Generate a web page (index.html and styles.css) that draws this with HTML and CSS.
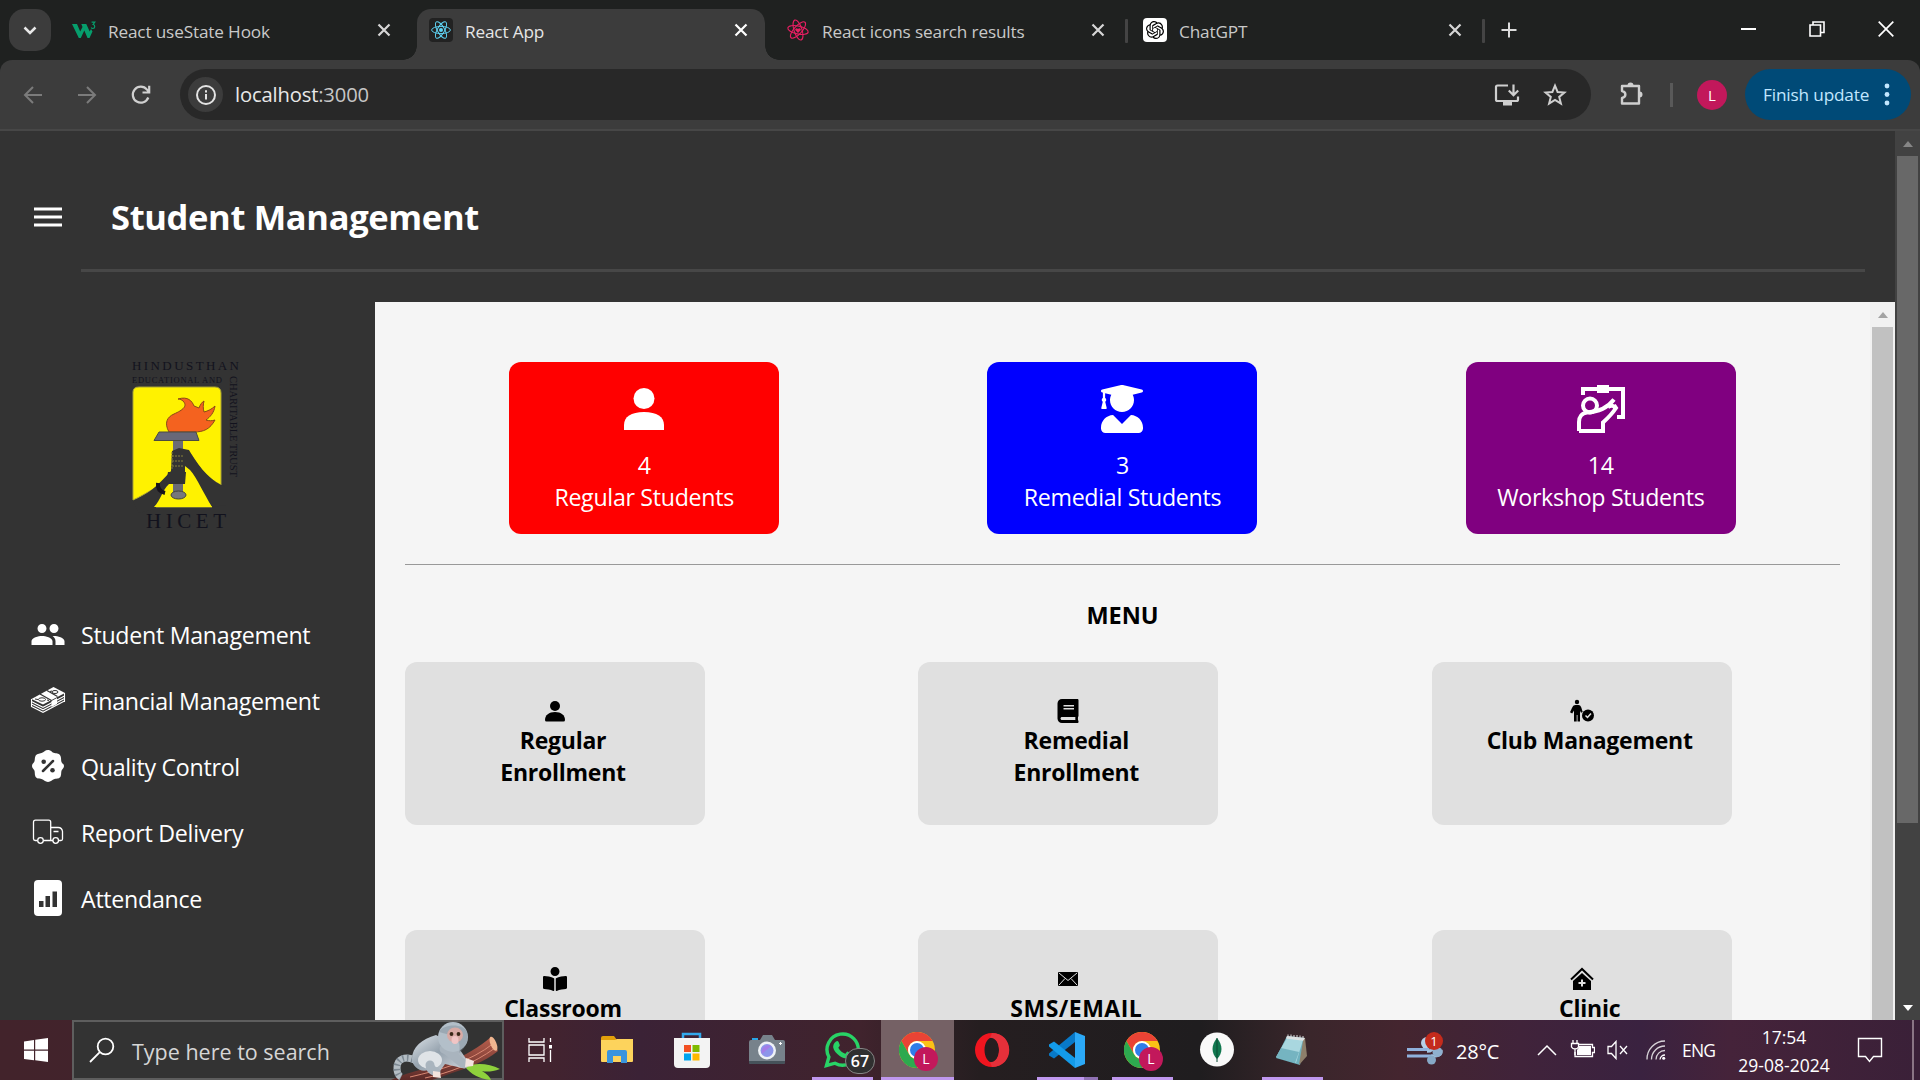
FILE: index.html
```html
<!DOCTYPE html>
<html lang="en">
<head>
<meta charset="utf-8">
<title>React App</title>
<link rel="stylesheet" href="styles.css">
</head>
<body>
<svg class="defs" aria-hidden="true">
  <symbol id="x" viewBox="0 0 24 24"><path d="M6.5 6.500l11 11M17.500 6.500l-11 11" fill="none" stroke="currentColor" stroke-width="2.200"/></symbol>
  <symbol id="atom" viewBox="0 0 24 24"><g fill="none" stroke="currentColor" stroke-width="1.100"><ellipse cx="12" cy="12" rx="10.400" ry="4"/><ellipse cx="12" cy="12" rx="10.400" ry="4" transform="rotate(60 12 12)"/><ellipse cx="12" cy="12" rx="10.400" ry="4" transform="rotate(120 12 12)"/></g></symbol>
  <symbol id="chrome" viewBox="0 0 36 36"><circle cx="18" cy="18" r="18" fill="#fbc116"/><path d="M2.400 9A18 18 0 0 1 33.600 9H18a9 9 0 0 0-7.800 13.500z" fill="#e94335"/><path d="M2.400 9A18 18 0 0 0 18 36l7.800-13.500a9 9 0 0 1-15.600 0z" fill="#2da94f"/><circle cx="18" cy="18" r="9" fill="#fff"/><circle cx="18" cy="18" r="7" fill="#2f7de9"/></symbol>
</svg>

<header class="tabstrip">
  <div class="tab-search"><svg width="20" height="20" viewBox="0 0 20 20"><path d="M4.500 7.500L10 13l5.500-5.500" fill="none" stroke="#e8e8e8" stroke-width="2.500"/></svg></div>
  <div class="tab">
    <svg class="fav" viewBox="0 0 24 24"><path d="M0 6h5l3.200 7.500L10.500 9 9.300 6h5l3.400 7.500 1.300-2.500 1.500 2.500L17.500 20h-2L12.300 12.500 8.800 20h-2z" fill="#069e6c"/><path d="M19.600 4.200h3.200l-1.700 2.300c2.300.3 2.100 4-.2 4-.8 0-1.400-.4-1.600-1" fill="none" stroke="#069e6c" stroke-width="1.200"/></svg>
    <span class="tab-title">React useState Hook</span><svg class="close"><use href="#x"/></svg>
  </div>
  <div class="tab active">
    <svg class="fav react" viewBox="0 0 24 24"><use href="#atom" x="1.200" y="1.200" width="21.600" height="21.600"/><circle cx="12" cy="12" r="2"/></svg>
    <span class="tab-title">React App</span><svg class="close"><use href="#x"/></svg>
  </div>
  <div class="tab">
    <svg class="fav icons" viewBox="0 0 24 24"><g transform="rotate(12 12 12)"><use href="#atom" width="24" height="24"/></g><path d="M12 15l-2.600-2.700c-1-1.600 1.400-3 2.600-1.300 1.200-1.700 3.600-.3 2.600 1.300z" fill="#e91e63"/></svg>
    <span class="tab-title">React icons search results</span><svg class="close"><use href="#x"/></svg><i class="tab-sep"></i>
  </div>
  <div class="tab">
    <svg class="fav gpt" viewBox="-4 -4 32 32"><path d="M22.2819 9.8211a5.9847 5.9847 0 0 0-.5157-4.9108 6.0462 6.0462 0 0 0-6.5098-2.9A6.0651 6.0651 0 0 0 4.9807 4.1818a5.9847 5.9847 0 0 0-3.9977 2.9 6.0462 6.0462 0 0 0 .7427 7.0966 5.98 5.98 0 0 0 .511 4.9107 6.051 6.051 0 0 0 6.5146 2.9001A5.9847 5.9847 0 0 0 13.2599 24a6.0557 6.0557 0 0 0 5.7718-4.2058 5.9894 5.9894 0 0 0 3.9977-2.9001 6.0557 6.0557 0 0 0-.7475-7.0729zm-9.022 12.6081a4.4755 4.4755 0 0 1-2.8764-1.0408l.1419-.0804 4.7783-2.7582a.7948.7948 0 0 0 .3927-.6813v-6.7369l2.02 1.1686a.071.071 0 0 1 .038.052v5.5826a4.504 4.504 0 0 1-4.4945 4.4944zm-9.6607-4.1254a4.4708 4.4708 0 0 1-.5346-3.0137l.142.0852 4.783 2.7582a.7712.7712 0 0 0 .7806 0l5.8428-3.3685v2.3324a.0804.0804 0 0 1-.0332.0615L9.74 19.9502a4.4992 4.4992 0 0 1-6.1408-1.6464zM2.3408 7.8956a4.485 4.485 0 0 1 2.3655-1.9728V11.6a.7664.7664 0 0 0 .3879.6765l5.8144 3.3543-2.0201 1.1685a.0757.0757 0 0 1-.071 0l-4.8303-2.7865A4.504 4.504 0 0 1 2.3408 7.872zm16.5963 3.8558L13.1038 8.364 15.1192 7.2a.0757.0757 0 0 1 .071 0l4.8303 2.7913a4.4944 4.4944 0 0 1-.6765 8.1042v-5.6772a.79.79 0 0 0-.407-.667zm2.0107-3.0231l-.142-.0852-4.7735-2.7818a.7759.7759 0 0 0-.7854 0L9.409 9.2297V6.8974a.0662.0662 0 0 1 .0284-.0615l4.8303-2.7866a4.4992 4.4992 0 0 1 6.6802 4.66zM8.3065 12.863l-2.02-1.1638a.0804.0804 0 0 1-.038-.0567V6.0742a4.4992 4.4992 0 0 1 7.3757-3.4537l-.142.0805L8.704 5.459a.7948.7948 0 0 0-.3927.6813zm1.0976-2.3654l2.602-1.4998 2.6069 1.4998v2.9994l-2.5974 1.4997-2.6067-1.4997Z"/></svg>
    <span class="tab-title">ChatGPT</span><svg class="close"><use href="#x"/></svg><i class="tab-sep"></i>
  </div>
  <svg class="plus" width="18" height="18" viewBox="0 0 18 18"><path d="M9 1.500v15M1.500 9h15" stroke="#dcdcdc" stroke-width="2"/></svg>
  <div class="win-buttons">
    <svg width="16" height="16" viewBox="0 0 16 16"><path d="M1 8h15" stroke="#fff" stroke-width="2"/></svg>
    <svg width="16" height="16" viewBox="0 0 16 16"><path d="M1 4h10.500v11H1zM4 4V1h11v10.500h-3.500" fill="none" stroke="#fff" stroke-width="1.600"/></svg>
    <svg width="16" height="16" viewBox="0 0 16 16"><path d="M.7.7l14.600 14.600M15.300.7L.7 15.300" stroke="#fff" stroke-width="1.700"/></svg>
  </div>
</header>

<div class="toolbar-back">
<div class="toolbar">
  <div class="nav-buttons">
    <svg width="20" height="20" viewBox="0 0 20 20"><path d="M19 10H2.500M10 2L2 10l8 8" fill="none" stroke="#7b7b7b" stroke-width="2"/></svg>
    <svg width="20" height="20" viewBox="0 0 20 20"><path d="M1 10h16.500M10 2l8 8-8 8" fill="none" stroke="#7b7b7b" stroke-width="2"/></svg>
    <svg width="20" height="20" viewBox="0 0 20 20"><path d="M17.300 12.500A8 8 0 1 1 16 4.600l2 2.400M18.200.8V7.500H11.500" fill="none" stroke="#d0d0d0" stroke-width="2.200"/></svg>
  </div>
  <div class="omnibox">
    <span class="info"><svg width="22" height="22" viewBox="0 0 22 22"><circle cx="11" cy="11" r="9" fill="none" stroke="#e3e3e3" stroke-width="2"/><path d="M11 10v5.500M11 6.200v2.200" stroke="#e3e3e3" stroke-width="2"/></svg></span>
    <span class="url">localhost<em>:3000</em></span>
    <svg class="install" width="26" height="24" viewBox="0 0 26 24"><path d="M14 2.500H3.500a1.500 1.500 0 0 0-1.500 1.500v12.500a1.500 1.500 0 0 0 1.500 1.500h19a1.500 1.500 0 0 0 1.500-1.500V13.500" fill="none" stroke="#cfcfcf" stroke-width="2.200"/><path d="M19.500 1.500v10M14.800 7.500l4.700 4.700 4.700-4.700" fill="none" stroke="#cfcfcf" stroke-width="2.200"/><path d="M9 18h9v4.500H9z" fill="#cfcfcf"/></svg>
    <svg class="star" width="24" height="24" viewBox="0 0 24 24"><path d="M12 2.700l2.600 6.300 6.800.5-5.200 4.400 1.700 6.700-5.900-3.700-5.900 3.700 1.700-6.700L2.600 9.500l6.800-.5z" fill="none" stroke="#cfcfcf" stroke-width="2"/></svg>
  </div>
  <svg class="puzzle" width="26" height="26" viewBox="0 0 26 26"><path d="M3 5h17v17.500H3v-5.500c4.500-1 4.500-6 0-7z" fill="none" stroke="#cfcfcf" stroke-width="2.400" stroke-linejoin="round"/><path d="M8.500 4.500a3 3 0 0 1 6 0zM20.500 10.500a3 3 0 0 1 0 6z" fill="#cfcfcf"/></svg>
  <i class="bar-sep"></i>
  <span class="avatar">L</span>
  <div class="update"><span>Finish update</span><svg width="6" height="24" viewBox="0 0 6 24" fill="#c2e7ff"><circle cx="3" cy="3" r="2.400"/><circle cx="3" cy="11.500" r="2.400"/><circle cx="3" cy="20" r="2.400"/></svg></div>
</div>
</div>

<div class="viewport">
  <div class="app">
    <div class="app-header">
      <svg width="28" height="20" viewBox="0 0 28 20"><path d="M0 2h28M0 10h28M0 18h28" stroke="#fff" stroke-width="3"/></svg>
      <h1>Student Management</h1>
    </div>
    <div class="rule"></div>
    <div class="body">
      <nav class="sidebar">
        <svg class="logo" width="120" height="180" viewBox="125 355 120 180">
          <g font-family="Liberation Serif, serif" fill="#12121d">
            <text x="132" y="370" font-size="13" textLength="107">HINDUSTHAN</text>
            <text x="132" y="382.500" font-size="8.500" textLength="90">EDUCATIONAL AND</text>
            <text transform="translate(230 376) rotate(90)" font-size="11" textLength="101" lengthAdjust="spacingAndGlyphs">CHARITABLE TRUST</text>
            <text x="146" y="528" font-size="21" textLength="80">HICET</text>
          </g>
          <path d="M133 500V392q0-5 6-5h76q6 0 6 6v92c-12-6-22-16-30-31l-5-3-1 15c8 11 14 26 27 41h-56c8-9 8-20 18-26l-5 1c-12 3-22 12-36 18z" fill="#fff200" stroke="#a8a338" stroke-width="1"/>
          <path d="M169 432c-5-9-2-15 5-18 9-4 14-8 9-13-1-1-3-2-5-2 10-3 14 2 16 7l5 2c1-3 3-6 5-7-1 4-1 7 0 11 4-1 8-3 11-6-1 7-5 11-9 14 3 1 6 1 9 0-5 9-11 12-21 12z" fill="#f4621f" stroke="#8a4a17" stroke-width="1"/>
          <path d="M159 432h37l3 8.500h-45z" fill="#686878" stroke="#4b4b40"/>
          <path d="M173 441h10v50h-10z" fill="#6b6b74"/>
          <path d="M133 501c14-5 26-17 38-30l1-20 7-3 10 2c7 12 18 28 32 35l5 2v18l-14 2c-9-12-15-27-25-39l-1 16c-9 2-15 0-18 4l-13 21-16 4z" fill="#333"/>
          <path d="M154 507c7-7 8-17 15-23h16c9 6 16 13 27 23z" fill="#fff200"/>
          <path d="M190 470c7 8 14 24 22 37h-22l-5-21v-20z" fill="#fff200"/>
          <path d="M168 472h18l-1 12h-19z" fill="#333"/>
          <path d="M172 452v18M172 456h12M172 461h12M172 466h12" stroke="#87813d" stroke-dasharray="2 1"/>
          <path d="M173 484h10v9h-10z" fill="#6b6b74"/><ellipse cx="178.500" cy="495" rx="7.500" ry="4" fill="#77777c" stroke="#44443a"/>
          <path d="M158 483q-1 8 7 10" fill="none" stroke="#16131b" stroke-width="4"/>
        </svg>
        <ul>
          <li><svg width="37" height="37" viewBox="0 0 24 24" fill="#fff"><path d="M16 11c1.660 0 2.990-1.340 2.990-3S17.660 5 16 5c-1.660 0-3 1.340-3 3s1.340 3 3 3zm-8 0c1.660 0 2.990-1.340 2.990-3S9.660 5 8 5C6.340 5 5 6.340 5 8s1.340 3 3 3zm0 2c-2.330 0-7 1.170-7 3.500V19h14v-2.500c0-2.330-4.670-3.500-7-3.500zm8 0c-.29 0-.62.020-.97.050 1.160.84 1.970 1.970 1.970 3.450V19h6v-2.500c0-2.330-4.670-3.500-7-3.500z"/></svg><span>Student Management</span></li>
          <li><svg width="36" height="36" viewBox="0 0 36 36"><path d="M1.500 17L23.500 5l11.500 6L13 22.500z" fill="#fff"/><path d="M1.500 19.500L13 25.300 34.500 14M1.500 22L13 27.800 34.500 16.500M1.500 24.500L13 30.300 34.500 19M1.500 17v8M34.500 11v9" fill="none" stroke="#fff" stroke-width="1.100"/><path d="M10 12l11.500 6.500M17 8.500l10.500 6" stroke="#333" stroke-width="1.200"/><ellipse cx="12" cy="17.500" rx="3.500" ry="1.700" fill="none" stroke="#333"/><ellipse cx="25" cy="10" rx="3" ry="1.500" fill="none" stroke="#333"/><path d="M5 17l3 .5M17 18l2 .5M20 9.500l2-.5" stroke="#333"/><path d="M21.500 19l5.500-3v6l-5.500 3z" fill="#fff"/></svg><span>Financial Management</span></li>
          <li><svg width="36" height="36" viewBox="0 0 36 36"><path d="M18 2c3 0 4 2.600 6.500 3.100 2.600.4 4.900.3 6.100 3.100.9 2.300.1 4.200 1.100 6.300C32.600 16 34 16 34 18s-1.400 2.600-2.300 4.300c-.9 2-.1 3.900-1.100 6.200-1.200 2.400-3.700 1.800-6.100 2.600C22 32 21 34 18 34s-4-2-6.500-2.900c-2.400-.8-4.900-.2-6.100-2.600-1-2.300-.2-4.200-1.100-6.200C3.400 20.600 2 20 2 18s1.400-2.600 2.300-4.300c.9-2 .1-3.600 1.100-5.500 1.200-2.500 3.700-2.300 6.100-3.100C14 4.300 15 2 18 2z" fill="#fff"/><path d="M13 23l10-10" stroke="#333" stroke-width="2.500" stroke-linecap="round"/><circle cx="13.700" cy="13.700" r="2.300" fill="#333"/><circle cx="22.500" cy="22.300" r="2.300" fill="#333"/></svg><span>Quality Control</span></li>
          <li><svg width="36" height="36" viewBox="0 0 36 36" fill="none" stroke="#fff" stroke-width="1.300"><path d="M7 26.500H5.200a1.700 1.700 0 0 1-1.700-1.700V8.200a2 2 0 0 1 2-2h13.200a2 2 0 0 1 2 2v18.300H13.500M20.700 13.500h7.500a4.500 4.500 0 0 1 4.300 4v7.500q0 1.500-1.500 1.500h-2.500M20.700 26.500h2.300M23.500 17.500h5"/><circle cx="10.500" cy="26.500" r="2.800"/><circle cx="25.700" cy="26.500" r="2.800"/></svg><span>Report Delivery</span></li>
          <li><svg width="36" height="36" viewBox="0 0 36 36"><rect x="4" y="0" width="28" height="36" rx="4" fill="#fff"/><path d="M9 21h4.500v6H9zM15.500 16h4.500v11h-4.500zM22.500 11.500h4.500V27h-4.500z" fill="#333"/></svg><span>Attendance</span></li>
        </ul>
      </nav>
      <main class="main">
        <section class="stats">
          <div class="stat red"><svg width="48" height="48" viewBox="0 0 48 48" fill="#fff"><circle cx="24" cy="13.500" r="10.500"/><path d="M4 45v-5c0-8 7-13 20-13s20 5 20 13v5z"/></svg><b>4</b><span>Regular Students</span></div>
          <div class="stat blue"><svg width="48" height="48" viewBox="-32 0 512 512" fill="#fff"><path d="M319.400 320.600L224 416l-95.400-95.400C57.100 323.700 0 382.200 0 454.400v9.600c0 26.500 21.500 48 48 48h352c26.500 0 48-21.500 48-48v-9.600c0-72.200-57.100-130.700-128.600-133.800zM13.600 79.800l6.400 1.500v58.400c-7 4.200-12 11.500-12 20.300 0 8.400 4.600 15.400 11.100 19.700L3.500 242c-1.700 6.900 2.100 14 7.600 14h41.800c5.500 0 9.300-7.100 7.600-14l-15.600-62.300C51.400 175.400 56 168.400 56 160c0-8.800-5-16.100-12-20.300V87.100l66 15.900c-8.600 17.200-14 36.400-14 57 0 70.700 57.300 128 128 128s128-57.300 128-128c0-20.600-5.300-39.800-14-57l96.300-23.200c18.200-4.400 18.200-27.100 0-31.500l-190.400-46c-13-3.100-26.700-3.100-39.700 0L13.600 48.200c-18.100 4.400-18.100 27.200 0 31.600z"/></svg><b>3</b><span>Remedial Students</span></div>
          <div class="stat purple"><svg width="48" height="48" viewBox="0 0 48 48" fill="none" stroke="#fff" stroke-width="4"><path d="M6 10V4h40v28h-6" /><path d="M20 0h12v8H20z" fill="#fff" stroke="none"/><circle cx="13" cy="20.500" r="7"/><path d="M2 46V37c0-5 3-9 8-9.500 12-.5 20-4 27-13M37 20l2 3c-4 6-8 10-13 14.500V46H2M31 22q5-3 7 1"/></svg><b>14</b><span>Workshop Students</span></div>
        </section>
        <div class="divider"></div>
        <h2>MENU</h2>
        <section class="menu">
          <div class="item"><svg width="24" height="24" viewBox="0 0 24 24"><circle cx="12" cy="7" r="5"/><path d="M2 21c0-5 4-8 10-8s10 3 10 8q0 1.500-1.500 1.500h-17Q2 22.500 2 21z"/></svg><h3>Regular Enrollment</h3></div>
          <div class="item"><svg width="24" height="24" viewBox="-32 0 512 512"><path d="M448 360V24c0-13.300-10.700-24-24-24H96C43 0 0 43 0 96v320c0 53 43 96 96 96h328c13.300 0 24-10.700 24-24v-16c0-7.500-3.500-14.300-8.900-18.700-4.200-15.400-4.200-59.300 0-74.700 5.400-4.300 8.900-11.100 8.900-18.600zM128 134c0-3.300 2.700-6 6-6h212c3.300 0 6 2.700 6 6v20c0 3.300-2.700 6-6 6H134c-3.300 0-6-2.700-6-6v-20zm0 64c0-3.300 2.700-6 6-6h212c3.300 0 6 2.700 6 6v20c0 3.300-2.700 6-6 6H134c-3.300 0-6-2.700-6-6v-20zm253.400 250H96c-17.700 0-32-14.300-32-32 0-17.600 14.400-32 32-32h285.400c-1.900 17.100-1.900 46.900 0 64z"/></svg><h3>Remedial Enrollment</h3></div>
          <div class="item"><svg width="24" height="24" viewBox="0 0 24 24"><circle cx="7" cy="3" r="2.200"/><path d="M5.500 6h3C11 6 11.500 9 12.700 13l-1.700.8-1-2V22.500H7.500V16h-.8v6.500H4V11.500l-1.800 3L0 13.200C2 9.500 2.500 6 5.500 6z"/><circle cx="18" cy="16.500" r="6"/><path d="M15.500 16.500l2 2 3.500-4" fill="none" stroke="#e0e0e0" stroke-width="1.500"/></svg><h3>Club Management</h3></div>
          <div class="item"><svg width="24" height="24" viewBox="0 0 512 512"><path d="M352 96c0-53.020-42.980-96-96-96s-96 42.980-96 96 42.980 96 96 96 96-42.980 96-96zM233.590 241.100c-59.330-36.320-155.430-46.300-203.790-49.050C13.550 191.130 0 203.510 0 219.140v222.800c0 14.330 11.590 26.280 26.490 27.050 43.660 2.290 131.990 10.680 193.040 41.430 9.370 4.720 20.480-1.710 20.480-11.870V252.560c-.01-4.670-2.320-8.950-6.420-11.460zm248.610-49.050c-48.350 2.740-144.460 12.730-203.780 49.050-4.100 2.510-6.410 6.960-6.410 11.630v245.790c0 10.190 11.140 16.630 20.540 11.900 61.040-30.720 149.320-39.110 192.970-41.400 14.900-.78 26.490-12.730 26.490-27.060V219.140c-.01-15.630-13.560-28.010-29.810-27.090z"/></svg><h3>Classroom</h3></div>
          <div class="item"><svg width="24" height="24" viewBox="0 0 24 24"><rect x="2" y="5" width="20" height="14" rx="1"/><path d="M3 6l9 7.500L21 6M3 18l6-6.500M21 18l-6-6.500" fill="none" stroke="#e0e0e0" stroke-width="1"/></svg><h3 class="wide">SMS/EMAIL</h3></div>
          <div class="item"><svg width="24" height="24" viewBox="0 0 24 24"><path d="M1 12.500L12 2l11 10.500" fill="none" stroke="#000" stroke-width="2"/><path d="M12 6l9 8v9H3v-9z"/><path d="M12 12.500v7M8.500 16h7" stroke="#e0e0e0" stroke-width="2"/></svg><h3>Clinic</h3></div>
        </section>
      </main>
      <div class="inner-scroll"><i class="up"></i><i class="thumb"></i></div>
    </div>
  </div>
  <div class="page-scroll"><i class="up"></i><i class="thumb"></i><i class="down"></i></div>
</div>

<footer class="taskbar">
  <div class="start"><svg width="24" height="24" viewBox="0 0 24 24" fill="#fff"><path d="M0 3.500L10 2v9.500H0zM11.200 1.700L24 0v11.500H11.200zM0 12.700h10v9.600L0 21zM11.200 12.700H24V24l-12.800-1.700z"/></svg></div>
  <div class="search">
    <svg width="26" height="26" viewBox="0 0 26 26" fill="none" stroke="#fff" stroke-width="1.800"><circle cx="16.500" cy="9.500" r="7.800"/><path d="M10.800 15.200L1 25"/></svg>
    <span>Type here to search</span>
    <svg class="monkey" width="112" height="58" viewBox="390 1021 112 58">
      <defs><linearGradient id="fur" x2="1" y2="1"><stop stop-color="#dfe5ea"/><stop offset=".45" stop-color="#94a1ad"/><stop offset="1" stop-color="#d8dde2"/></linearGradient><linearGradient id="wood" x2="0" y2="1"><stop stop-color="#b85f4d"/><stop offset="1" stop-color="#5b2a28"/></linearGradient></defs>
      <path d="M391 1079c22-10 40-12 60-19 15-6 28-14 40-24l7 14c-14 11-30 17-46 22-8 3-14 5-20 7z" fill="url(#wood)"/><path d="M410 1076c30-7 60-15 84-34M425 1077c24-5 48-14 70-30" stroke="#d98873" fill="none"/><ellipse cx="493.500" cy="1043" rx="3" ry="7.500" transform="rotate(-22 493 1043)" fill="#f0b690"/>
      <path d="M465 1066c12-5 24-3 35 2-8 3-14 3-18 2 5 3 8 6 9 9-12-1-20-6-26-13z" fill="#8ed13c"/>
      <path d="M417 1060c-12-6-20-2-20 7 0 5 2 8 4 9" stroke="#b4bdc4" stroke-width="7" fill="none"/><path d="M417 1060c-12-6-20-2-20 7 0 5 2 8 4 9" stroke="#7d8993" stroke-width="7" fill="none" stroke-dasharray="1.500 3"/>
      <path d="M412 1058c0-12 10-20 24-24l22 12 11 16-7 5-17-4-7 10-10-4c-8 3-16-4-16-11z" fill="url(#fur)"/>
      <ellipse cx="430" cy="1059" rx="12" ry="9" fill="#dfe3e7"/><path d="M444 1048c6 2 14 12 20 15M430 1064c0 4 3 6 6 7" stroke="#a9b4be" stroke-width="9" fill="none" stroke-linecap="round"/>
      <path d="M466 1057l8 3-1 5-8 1zM433 1070l7 1 1 6-8-1z" fill="#f3e4de"/>
      <circle cx="453" cy="1036" r="15" fill="#b3bfc9"/><path d="M439 1031c4-8 24-9 28 0 2 8-1 16-8 21 2-9-1-14-5-17z" fill="#6f7d89" opacity=".35"/><ellipse cx="455" cy="1034" rx="8" ry="7.500" fill="#d8aaa5"/><circle cx="451.500" cy="1033" r="1.900" fill="#3a2818"/><circle cx="458.500" cy="1033" r="1.900" fill="#3a2818"/><ellipse cx="455" cy="1039" rx="3.500" ry="4" fill="#f1c5c5"/>
    </svg>
  </div>
  <div class="apps">
    <div class="slot"><svg class="task-view" width="26" height="24" viewBox="0 0 26 24" fill="none" stroke="#fff" stroke-width="1.300"><path d="M2 0v4h15V0M2 24v-4h15v4M2 7h15v10H2zM23.500 0v4M23.500 12v12"/><path d="M22 7h3v3.500h-3z" fill="#fff" stroke="none"/></svg></div>
    <div class="slot"><svg width="32" height="28" viewBox="0 0 32 28"><path d="M0 2q0-2 2-2h11l3 4H0z" fill="#e2a00b"/><path d="M0 4h14l2-1h16v22q0 1-1 1H1q-1 0-1-1z" fill="#fdd35c"/><path d="M6 27V16q0-2 2-2h16q2 0 2 2v11h-6v-7h-8v7z" fill="#3a94dd"/></svg></div>
    <div class="slot"><svg width="36" height="36" viewBox="0 0 36 36"><path d="M9 8V2h17v6" fill="none" stroke="#31a9ed" stroke-width="2.500"/><path d="M0 6h36v26q0 4-4 4H4q-4 0-4-4z" fill="#f3f3f3"/><path d="M10 13h7v7h-7z" fill="#f25022"/><path d="M18.500 13h7v7h-7z" fill="#7fba00"/><path d="M10 21.500h7v7h-7z" fill="#00a4ef"/><path d="M18.500 21.500h7v7h-7z" fill="#ffb900"/></svg></div>
    <div class="slot"><svg width="36" height="30" viewBox="0 0 36 30"><path d="M3 3h6v4H3z" fill="#29a5e5"/><path d="M2 5h9l3-5h9l3 5h8q2 0 2 2v20q0 2-2 2H2q-2 0-2-2V7q0-2 2-2z" fill="#77828b"/><path d="M0 26h36v1.500q0 1.500-2 1.500H2q-2 0-2-1.500z" fill="#46525a"/><circle cx="18" cy="15.500" r="9" fill="#eef2f6"/><circle cx="18" cy="15.500" r="6.500" fill="#8d95ea"/><path d="M13 19a6.500 6.500 0 0 1 9-8z" fill="#a47de8"/><path d="M31.500 7v3M30 8.500h3" stroke="#fff"/></svg></div>
    <div class="slot open"><svg width="36" height="36" viewBox="0 0 36 36"><path d="M2.500 33.500l2.400-8.500A15.600 15.600 0 1 1 11 31.200z" fill="none" stroke="#28d366" stroke-width="3.400"/><path d="M12 9.500c1-1 2-.7 2.600.6l1.200 3c.3.9-1.300 2.200-1.500 2.600 1.500 3 4 5 7 6 .7-.3 1.500-2.100 2.200-2.200l3.500 1.700c1 .6.3 3.300-.8 4.100-3 2.300-7.500.8-10.500-1.300-3.300-2.400-6-5.500-6.500-8.500-.3-2 .7-4.500 2.800-6z" fill="#28d366"/></svg><span class="count">67</span></div>
    <div class="slot open current"><svg width="36" height="36"><use href="#chrome"/></svg><span class="who">L</span></div>
    <div class="slot"><svg width="36" height="36" viewBox="0 0 36 36"><path d="M18 1a17 17 0 1 0 0 34 17 17 0 1 0 0-34zm0 4.500c4 0 7 5.600 7 12.500s-3 12.500-7 12.500-7.500-5.600-7.500-12.500S14 5.500 18 5.500z" fill="#f0151f" fill-rule="evenodd"/><path d="M18 1c23 0 23 34 0 34l-2-4.800c12 0 12-24.400 0-24.400z" fill="#e6303a"/></svg></div>
    <div class="slot open split"><svg width="36" height="36" viewBox="0 0 36 36"><path d="M26 0v10L5 26.500 0 23.500v-2z" fill="#0879c8"/><path d="M26 36V26L5 9.500 0 12.500v2z" fill="#139bea"/><path d="M26 0l10 4v28l-10 4z" fill="#2ba9f7"/></svg></div>
    <div class="slot open"><svg width="36" height="36"><use href="#chrome"/></svg><span class="who">L</span></div>
    <div class="slot"><svg width="36" height="36" viewBox="0 0 36 36"><circle cx="18" cy="17.500" r="17" fill="#f9f9f9"/><path d="M18 6c6 7 6 15 0 21-6-6-6-14 0-21z" fill="#11784f"/><path d="M18 6v24" stroke="#0a4a35"/></svg></div>
    <div class="slot open"><svg width="36" height="36" viewBox="0 0 36 36"><path d="M13 4l18 2-5 27-24-7z" fill="#6fb1be"/><path d="M13 6l16 2-7 23-20-6z" fill="#a9d7df"/><path d="M13 4l18 2v3L12 6.500z" fill="#dce4e5"/><path d="M31 6l2 18-8 9 4-24z" fill="#8d7f6b"/><path d="M14 2.500v4M17 2.500v4.500M20 3v4.500M23 3v4.500M26 3.500v4.500M29 4v4" stroke="#ddd"/><path d="M7 16l18 4-4 11-19-6z" fill="#5fa5b4" opacity=".7"/></svg></div>
  </div>
  <div class="tray">
    <span class="weather"><svg width="40" height="36" viewBox="0 0 40 36"><circle cx="20" cy="11" r="6" fill="#b7cfe8"/><path d="M0 17.500h22M0 24h26" stroke="#8fb1dd" stroke-width="3.200"/><path d="M20 19.200q6 0 6-5M24 24q11 1 10-6" stroke="#a4c2df" stroke-width="3.200" fill="none"/><circle cx="24.500" cy="28" r="4.500" fill="#86a8c6"/><circle cx="30.500" cy="20" r="5" fill="#8fb0cf"/></svg><i>1</i></span>
    <span class="temp">28°C</span>
    <svg width="22" height="14" viewBox="0 0 22 14"><path d="M3 12l9-9 9 9" fill="none" stroke="#fff" stroke-width="1.500"/></svg>
    <svg width="26" height="20" viewBox="0 0 26 20" fill="none" stroke="#fff" stroke-width="1.300"><path d="M9 4.500h14.500v3h2v5h-2v4H6V12"/><path d="M9 6h13v9H8v-5l1.500-2z" fill="#fff" stroke="none"/><path d="M4 0v3M8 0v3M2.500 3.500h7v3.500q-1 2-3.500 2t-3.500-2zM6 9v6"/></svg>
    <svg width="24" height="20" viewBox="0 0 24 20" fill="none" stroke="#fff" stroke-width="1.300"><path d="M3 6.500h3.500L11 1.500v17l-4.500-5H3zM15 6l7 8M22 6l-7 8"/></svg>
    <svg width="22" height="22" viewBox="0 0 22 22" fill="none" stroke="#fff" stroke-width="1.300"><path d="M2 20.500A18 18 0 0 1 20 2M6.500 20.500A13.500 13.500 0 0 1 20 7M11 20.500a9 9 0 0 1 9-9" opacity=".8"/><path d="M15 20.500a5 5 0 0 1 5-4.500"/><circle cx="18.700" cy="19.300" r="1.500" fill="#fff" stroke="none"/></svg>
    <span class="lang">ENG</span>
    <span class="clock"><time>17:54</time><time class="date">29-08-2024</time></span>
    <svg class="note" width="26" height="26" viewBox="0 0 26 26"><path d="M1.500 1.500h23v18h-8l-4 5-4-5h-7z" fill="none" stroke="#fff" stroke-width="1.400"/></svg>
    <i class="desk"></i>
  </div>
</footer>
</body>
</html>
```

FILE: styles.css
```css
* { box-sizing: border-box; }
html, body { margin: 0; height: 100%; overflow: hidden; }
body {
  width: 1920px;
  height: 1080px;
  display: flex;
  flex-direction: column;
  background: #333;
  font-family: "Open Sans", "Noto Sans", sans-serif;
}
svg { display: block; flex: none; }
i, em { font-style: normal; }
.defs { position: absolute; width: 0; height: 0; }

/* tab strip */
.tabstrip { height: 60px; flex: none; display: flex; align-items: flex-start; padding-left: 9px; background: #1f2120; }
.tab-search { width: 42px; height: 42px; margin: 9px 9px 0 0; border-radius: 15px; background: #3c3c3c; display: flex; align-items: center; justify-content: center; }
.tab { position: relative; width: 348px; height: 51px; margin: 9px 9px 0 0; padding: 0 12px 9px; display: flex; align-items: center; color: #c9c9c9; }
.tab.active { background: #3c3c3c; border-radius: 14px 14px 0 0; color: #e6e6e6; }
.tab.active::before, .tab.active::after { content: ""; position: absolute; bottom: 0; width: 14px; height: 14px; }
.tab.active::before { right: 100%; background: radial-gradient(circle at 0 0, transparent 13.5px, #3c3c3c 14px); }
.tab.active::after { left: 100%; background: radial-gradient(circle at 100% 0, transparent 13.5px, #3c3c3c 14px); }
.fav { width: 24px; height: 24px; margin-right: 12px; border-radius: 4px; }
.fav.react { background: #222; color: #5fd3f3; fill: #5fd3f3; }
.fav.icons { color: #e91e63; }
.fav.gpt { background: #fff; }
.tab-title { flex: 1; font-size: 17.2px; line-height: 24px; letter-spacing: -.15px; padding-top: 3px; white-space: nowrap; }
.close { width: 24px; height: 24px; color: #d6d6d6; }
.active .close { color: #fff; }
.tab-sep { position: absolute; right: -6px; top: 10px; width: 3px; height: 24px; background: #444; border-radius: 1px; }
.plus { margin: 21px 0 0 12px; }
.win-buttons { margin: 21px 26px 0 auto; display: flex; gap: 53px; }

/* toolbar */
.toolbar-back { flex: none; background: #1f2120; }
.toolbar { height: 71px; padding-top: 9px; border-bottom: 2px solid #474747; border-radius: 12px 12px 0 0; background: #3c3c3c; display: flex; align-items: flex-start; }
.nav-buttons { width: 180px; height: 51px; padding-left: 23px; display: flex; align-items: center; gap: 34px; }
.omnibox { width: 1411px; height: 51px; border-radius: 26px; background: #282828; display: flex; align-items: center; padding: 0 24px 0 8px; }
.info { width: 35px; height: 35px; border-radius: 50%; background: #3c3c3c; display: grid; place-items: center; }
.url { flex: 1; margin-left: 12px; padding-bottom: 2px; font-size: 20.2px; line-height: 30px; letter-spacing: -.15px; color: #e8e8e8; }
.url em { color: #c6c6c6; }
.install { margin-right: 23px; }
.puzzle { margin: 12px 0 0 28px; }
.bar-sep { width: 3px; height: 24px; margin: 14px 25px 0 25px; background: #595959; }
.avatar { width: 30px; height: 30px; margin: 11px 18px 0 -1px; border-radius: 50%; background: #c2185b; color: #fff; font-size: 15px; line-height: 30px; text-align: center; }
.update { width: 166px; height: 51px; border-radius: 26px; background: #004a77; color: #c2e7ff; font-size: 17.2px; letter-spacing: -.15px; display: flex; align-items: center; justify-content: space-between; padding: 0 21px 0 18px; white-space: nowrap; }
.update span { padding-bottom: 1px; }

/* page */
.viewport { flex: 1; min-height: 0; display: flex; overflow: hidden; }
.app { width: 1895px; display: flex; flex-direction: column; background: #333; }
.app-header { height: 138px; flex: none; padding: 40px 0 6px 34px; display: flex; align-items: center; gap: 49px; }
h1 { margin: 0; color: #fff; font-size: 34.5px; line-height: 46px; letter-spacing: -.35px; white-space: nowrap; }
.rule { height: 3px; flex: none; margin: 0 30px 30px 81px; background: #474747; }
.body { flex: 1; min-height: 0; display: flex; }
.sidebar { width: 375px; }
.logo { margin: 53px 0 0 125px; }
.sidebar ul { list-style: none; margin: 66px 0 0; padding: 0; }
.sidebar li { height: 66px; padding-left: 30px; display: flex; align-items: center; color: #fff; font-size: 23.2px; line-height: 32px; letter-spacing: -.28px; white-space: nowrap; }
.sidebar li svg { width: 36px; margin: 0 15px 0 0; }
.sidebar li span { padding-top: 2px; }
.main { width: 1495px; padding: 60px 30px 0; background: #f5f5f5; overflow: hidden; }
.stats { display: grid; grid-template-columns: repeat(3, 1fr); justify-items: center; }
.stat { width: 270px; height: 172px; padding-top: 23px; border-radius: 12px; display: flex; flex-direction: column; align-items: center; color: #fff; font-size: 23.2px; line-height: 32px; letter-spacing: -.3px; }
.stat svg { margin-bottom: 16px; }
.stat b { font-weight: 400; }
.red { background: #f00; }
.blue { background: #00f; }
.purple { background: #800080; }
.divider { height: 1px; margin: 30px 0 34px; background: #999; }
h2 { margin: 0; font-size: 23.5px; line-height: 32px; text-align: center; }
.menu { margin-top: 31px; display: grid; grid-template-columns: repeat(3, 1fr); gap: 105px; }
.item { width: 300px; height: 163px; padding: 37px 30px 0; border-radius: 12px; background: #e0e0e0; }
.item svg { margin: 0 auto 1px; }
.item h3 { margin: 0 0 0 16px; font-size: 23px; line-height: 32px; letter-spacing: -.25px; text-align: center; }
.item h3.wide { letter-spacing: .5px; }
.item:nth-child(-n+2) h3 { padding: 0 35px; }

/* scrollbars */
.inner-scroll, .page-scroll { width: 25px; display: flex; flex-direction: column; align-items: center; }
.inner-scroll { background: #f1f1f1; }
.page-scroll { background: #424242; }
.up { margin: 10px 0 9px; border: 5px solid transparent; border-top: 0; border-bottom: 6px solid #a3a3a3; }
.thumb { width: 21px; flex: 1; background: #c1c1c1; }
.page-scroll .thumb { flex: none; height: 667px; background: #686868; }
.page-scroll .up { border-bottom-color: #868686; }
.down { margin: auto 0 9px; border: 5px solid transparent; border-bottom: 0; border-top: 6px solid #fff; }

/* taskbar */
.taskbar { height: 60px; flex: none; display: flex; color: #fff; background: linear-gradient(90deg, #42232b 0, #42232f 550px, #3b2236 640px, #40232d 860px, #251e20 980px, #1f1d1f 1200px, #3a262b 1310px, #44252f 1400px, #40233a 1520px, #3a2240 1640px, #45233a 1730px, #3a2038 1920px); }
.start { width: 72px; display: grid; place-items: center; }
.search { width: 432px; border: 2px solid #5e5e5e; background: #333; display: flex; align-items: center; padding-left: 15px; color: #d6d6d6; font-size: 21.5px; white-space: nowrap; }
.search span { flex: 1; margin-left: 17px; padding-top: 3px; }
.monkey { margin-top: 2px; }
.apps { display: flex; }
.slot { position: relative; width: 75px; display: grid; place-items: center; }
.task-view { margin-right: 4px; }
.open::after { content: ""; position: absolute; left: 8px; right: 6px; bottom: 0; height: 3px; background: #bf97ee; }
.current { background: linear-gradient(90deg, transparent 2px, #756165 2px); }
.current::after { left: 2px; right: 0; }
.split::after { background: linear-gradient(90deg, #bf97ee 47px, #8f71b3 47px); }
.count, .who { position: absolute; border-radius: 50%; text-align: center; }
.count { left: 41px; top: 28px; width: 30px; height: 26px; border: 1px solid #858585; border-radius: 13px; background: #303030; font-size: 16px; font-weight: 600; line-height: 24px; }
.who { left: 35px; top: 27px; width: 24px; height: 24px; background: #c2185b; font-size: 14px; line-height: 24px; }
.tray { width: 513px; margin-left: auto; display: grid; align-items: center; grid-template-columns: 49px 79px 34px 36px 40px 37px 45px 114px 71px 1fr; font-size: 18px; }
.weather { position: relative; }
.weather i { position: absolute; left: 18px; top: 0; width: 18px; height: 18px; border-radius: 50%; background: #c42b1c; font-size: 13px; line-height: 18px; text-align: center; }
.temp { font-size: 20px; padding-top: 2px; letter-spacing: -.2px; }
.lang { font-size: 17.5px; letter-spacing: -.8px; }
.clock { display: flex; flex-direction: column; align-items: center; padding-top: 2px; line-height: 28px; font-size: 17.5px; }
.note { margin-left: 16px; }
.desk { width: 2px; height: 60px; background: #8a7585; }
```
